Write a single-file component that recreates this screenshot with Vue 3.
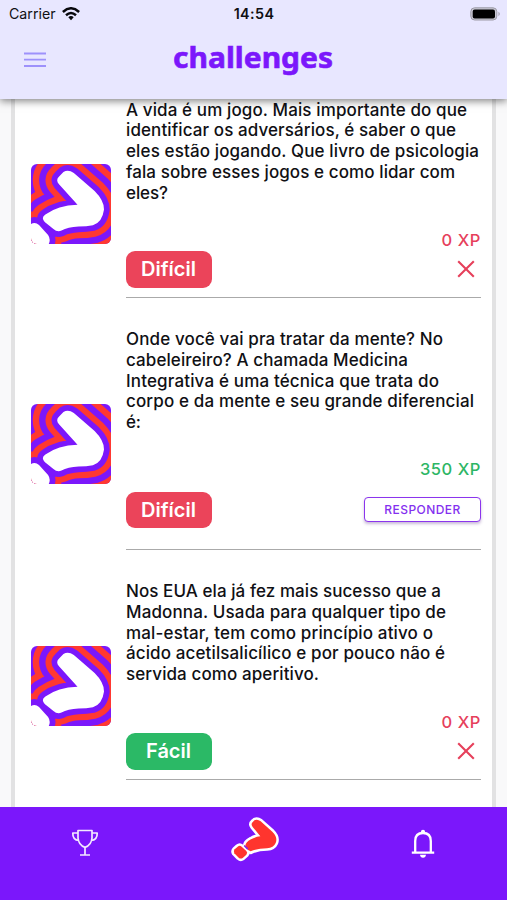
<script setup>
const items = [
  {
    lines: [
      ['A vida é um jogo. Mais importante do que', 341],
      ['identificar os adversários, é saber o que', 330],
      ['eles estão jogando. Que livro de psicologia', 353],
      ['fala sobre esses jogos e como lidar com', 329],
      ['eles?', 42],
    ],
    xp: '0 XP', level: 'Difícil', tone: 'red', open: false,
  },
  {
    lines: [
      ['Onde você vai pra tratar da mente? No', 317],
      ['cabeleireiro? A chamada Medicina', 282],
      ['Integrativa é uma técnica que trata do', 313],
      ['corpo e da mente e seu grande diferencial', 348],
      ['é:', 15],
    ],
    xp: '350 XP', level: 'Difícil', tone: 'red', open: true,
  },
  {
    lines: [
      ['Nos EUA ela já fez mais sucesso que a', 315],
      ['Madonna. Usada para qualquer tipo de', 320],
      ['mal-estar, tem como princípio ativo o', 307],
      ['ácido acetilsalicílico e por pouco não é', 319],
      ['servida como aperitivo.', 193],
    ],
    xp: '0 XP', level: 'Fácil', tone: 'green', open: false,
  },
]
const arm = 'M94 46L107 33Q121 24 138 36L200 90Q229 119 228 146Q223 184 195 192Q176 196 152 196Q120 198 101 208Q88 213 77 203L51 182Q39 170 53 160Q90 133 149 131L93 69Q83 56 94 46Z'
const dot = 'M-10 205L8 190Q21 180 34 191L61 221Q71 235 61 252L40 275L-10 280Z'
const mark = arm + dot
const rings = [
  [146, '#ff3831'],
  [108, '#7b17fb'],
  [70, '#ff3831'],
  [34, '#7b17fb'],
]
</script>

<template>
  <div class="screen">
    <header class="top">
      <div class="status">
        <div class="carrier">
          <span>Carrier</span>
          <svg width="18" height="14" viewBox="0 0 18 14" fill="none" stroke="#08080c" stroke-width="2.5">
            <path d="M.9 5Q9-2.4 17.1 5" /><path d="M4 8.2Q9 3.8 14 8.2" /><path d="M6.3 10.2Q9 7.8 11.7 10.2L9 13.2Z" fill="#08080c" stroke="none" />
          </svg>
        </div>
        <span class="clock">14:54</span>
        <svg class="battery" width="31" height="14" viewBox="0 0 31 14">
          <rect x=".8" y=".8" width="26" height="12.2" rx="3.8" fill="#c9c8d4" stroke="#9b9aa5" />
          <rect x="2.7" y="2.6" width="22.3" height="8.8" rx="2" fill="#000" /><path d="M28.5 4.8Q31 7 28.5 9.2Z" fill="#9b9aa5" />
        </svg>
      </div>
      <div class="title-row">
        <svg width="22" height="16" viewBox="0 0 22 16" stroke="#9d91fb" stroke-width="1.8"><path d="M0 1.5H22M0 7.7H22M0 14H22" /></svg>
        <svg class="logo" width="170" height="54"><text x="5" y="34.5" textLength="160" lengthAdjust="spacingAndGlyphs">challenges</text></svg>
      </div>
    </header>

    <main class="content">
      <div class="card">
        <article v-for="(item, i) in items" :key="i" class="item" :class="{ open: item.open }">
          <svg class="thumb" width="80" height="80" viewBox="10 9 239 239">
            <rect x="10" y="9" width="239" height="239" fill="#7b17fb" />
            <path v-for="ring in rings" :key="ring[0]" :d="mark" :stroke="ring[1]" :stroke-width="ring[0]" fill="none" stroke-linejoin="round" />
            <path :d="mark" fill="#fff" />
          </svg>
          <div class="body">
            <svg class="question" width="354" height="104">
              <text v-for="(line, n) in item.lines" :key="n" x="0" :y="16 + n * 20.75" :textLength="line[1]">{{ line[0] }}</text>
            </svg>
            <div class="xp" :class="item.open ? 'good' : 'bad'">{{ item.xp }}</div>
            <div class="actions">
              <span class="badge" :class="item.tone">{{ item.level }}</span>
              <button v-if="item.open" class="answer">RESPONDER</button>
              <svg v-else class="cross" width="18" height="18" viewBox="0 0 18 18" stroke="#e6405b" stroke-width="2.1"><path d="M1.2 1.2L16.8 16.8M16.8 1.2L1.2 16.8" /></svg>
            </div>
          </div>
        </article>
      </div>
    </main>

    <nav class="tabs">
      <svg width="28" height="28" viewBox="0 0 28 28" fill="none" stroke="#f3e9ff" stroke-width="1.7" stroke-linejoin="round">
        <path d="M7 1.5H21V9Q20.5 16 14 18.4Q7.5 16 7 9ZM7 4H1.8Q1.5 11 8 11.5M21 4H26.2Q26.5 11 20 11.5M14 18.4V26M9 26H19" />
      </svg>
      <svg class="question-mark" width="60" height="55" viewBox="0 0 180 165">
        <g stroke="#fff" stroke-width="15" stroke-linejoin="round" fill="#fff">
          <path d="M84 29Q94 18 107 28L142 59Q159 76 152 93Q146 107 126 109Q98 109 77 119L61 104Q60 91 78 82Q90 75 106 73L83 45Q76 36 84 29Z" />
          <path d="M50 104L64 117Q69 122 64 128L53 138Q47 142 41 137L28 124Q24 118 29 112L38 104Q44 99 50 104Z" />
        </g>
        <g fill="#ff352e">
          <path d="M84 29Q94 18 107 28L142 59Q159 76 152 93Q146 107 126 109Q98 109 77 118Q69 116 61 104Q60 91 78 82Q90 75 106 73L83 45Q76 36 84 29Z" />
          <path d="M50 104L64 117Q69 122 64 128L53 138Q47 142 41 137L28 124Q24 118 29 112L38 104Q44 99 50 104Z" />
        </g>
        <path d="M59 102L67 110" stroke="#8a25ea" stroke-width="5" stroke-linecap="round" />
      </svg>
      <svg width="24" height="29" viewBox="0 0 24 29" fill="none" stroke="#fff" stroke-width="2.3" stroke-linejoin="round">
        <path d="M4.2 23V12Q4.2 4 12 4Q19.8 4 19.8 12V23M.8 23.6H23.2" /><path d="M9 25.8H15Q14.6 28.8 12 28.8Q9.4 28.8 9 25.8Z" fill="#fff" stroke="none" /><circle cx="12" cy="2.8" r="2.1" fill="#fff" stroke="none" />
      </svg>
    </nav>
  </div>
</template>

<style>
body { margin: 0; overflow: hidden; }
</style>
<style scoped>
.screen { width: 507px; height: 900px; overflow: hidden; display: flex; flex-direction: column; background: #f9f9fa; font-family: Inter, sans-serif; color: #101014; }
.top { height: 99px; flex: none; background: #e8e7ff; box-shadow: 0 2px 8px rgba(0, 0, 0, .5); z-index: 1; }
.status { height: 27px; padding: 0 6px 0 9px; display: grid; grid-template-columns: 1fr auto 1fr; align-items: center; box-sizing: border-box; }
.carrier { display: flex; align-items: center; gap: 6px; font-size: 14.2px; }
.clock { font-size: 14.3px; font-weight: 600; letter-spacing: .4px; margin-left: -2px; }
.battery { justify-self: end; }
.title-row { height: 66px; display: flex; align-items: center; padding-left: 24px; gap: 122px; }
.logo text { font: 700 29px "Noto Sans", sans-serif; fill: #7b17fb; stroke: #7b17fb; stroke-width: .6px; }
.content { flex: 1; min-height: 0; display: flex; padding: 0 11px; overflow: hidden; }
.card { flex: 1; min-width: 0; background: #fff; border: solid #e2e2e3; border-width: 0 4px; }
.item { padding: 0 11px 31px 16px; display: flex; gap: 14.5px; }
.thumb { flex: none; border-radius: 6px; margin-top: 64.5px; }
.item:nth-child(2) .thumb { margin-top: 75px; }
.body { flex: 1; min-width: 0; height: 199px; display: flex; flex-direction: column; border-bottom: 1.5px solid #aaa; box-sizing: border-box; }
.open .body { height: 221px; }
.question { flex: none; overflow: visible; font-size: 17px; font-weight: 460; fill: #101014; }
.item:first-child .question text { transform: translateY(.5px); }
.xp { flex: none; height: 22px; line-height: 22px; margin-top: 26px; text-align: right; font-size: 16.5px; font-weight: 500; letter-spacing: .55px; }
.open .xp { margin-top: 25px; }
.good { color: #2db665; }
.bad { color: #e6405b; }
.actions { flex: none; display: flex; justify-content: space-between; align-items: center; height: 36.5px; }
.open .actions { margin-top: 11.5px; }
.badge { width: 86px; height: 36.5px; border-radius: 9px; display: flex; align-items: center; justify-content: center; color: #fff; font-size: 20px; font-weight: 560; }
.red { background: #eb445a; }
.green { background: #2bb966; }
.cross { margin-right: 6px; }
.answer { width: 117px; height: 25px; padding: 0; border: 1.5px solid #8b35ed; border-radius: 4px; background: #fff; box-shadow: 0 2px 3px rgba(80, 30, 130, .3); color: #8430ef; font: 500 12px Inter, sans-serif; letter-spacing: .45px; }
.tabs { height: 93px; flex: none; background: #7b17fb; display: grid; grid-template-columns: repeat(3, 1fr); justify-items: center; align-items: start; padding-top: 22px; box-sizing: border-box; }
.question-mark { margin: -17px 0 0 2px; }
</style>
